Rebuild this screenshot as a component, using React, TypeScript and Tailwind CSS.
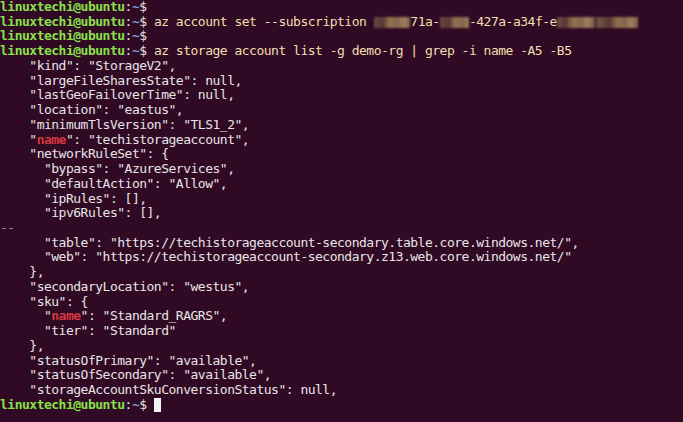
import React from "react";

type Seg = { t: string; c?: string; blur?: number };

const G = "text-[#8ae04a] font-bold";
const W = "text-[#e8e4e6]";
const CMD = "text-[#f0dfb0]";
const B = "text-[#7f9fd0] font-bold";
const R = "text-[#d8373f] font-bold";

const prompt = (): Seg[] => [
  { t: "linuxtechi@ubuntu", c: G },
  { t: ":", c: W },
  { t: "~", c: B },
  { t: "$ ", c: W },
];

const Blur = ({ n }: { n: number }) => {
  const shades = ["#a08858", "#6a4a40", "#b89c68", "#7c5e48", "#aa8e5c", "#5c3c38", "#92764e", "#bea270", "#6e5042", "#a2865a", "#886a4c", "#b0945e"];
  return (
    <span className="inline-flex h-[11px] align-middle blur-[0.8px]" style={{ width: `${n * 7.33}px` }}>
      {Array.from({ length: n * 2 }).map((_, i) => (
        <span
          key={i}
          className="h-full flex-1"
          style={{ background: shades[(i * 5 + 3) % shades.length], opacity: 0.75 }}
        />
      ))}
    </span>
  );
};

const lines: Seg[][] = [
  prompt(),
  [
    ...prompt(),
    { t: "az account set --subscription ", c: CMD },
    { t: "", blur: 5 },
    { t: "71a-", c: CMD },
    { t: "", blur: 4 },
    { t: "-427a-a34f-e", c: CMD },
    { t: "", blur: 11 },
  ],
  prompt(),
  [...prompt(), { t: "az storage account list -g demo-rg | grep -i name -A5 -B5", c: CMD }],
  [{ t: '    "kind": "StorageV2",' }],
  [{ t: '    "largeFileSharesState": null,' }],
  [{ t: '    "lastGeoFailoverTime": null,' }],
  [{ t: '    "location": "eastus",' }],
  [{ t: '    "minimumTlsVersion": "TLS1_2",' }],
  [{ t: '    "' }, { t: "name", c: R }, { t: '": "techistorageaccount",' }],
  [{ t: '    "networkRuleSet": {' }],
  [{ t: '      "bypass": "AzureServices",' }],
  [{ t: '      "defaultAction": "Allow",' }],
  [{ t: '      "ipRules": [],' }],
  [{ t: '      "ipv6Rules": [],' }],
  [{ t: "--", c: "text-[#8f9aa0]" }],
  [{ t: '      "table": "https://techistorageaccount-secondary.table.core.windows.net/",' }],
  [{ t: '      "web": "https://techistorageaccount-secondary.z13.web.core.windows.net/"' }],
  [{ t: "    }," }],
  [{ t: '    "secondaryLocation": "westus",' }],
  [{ t: '    "sku": {' }],
  [{ t: '      "' }, { t: "name", c: R }, { t: '": "Standard_RAGRS",' }],
  [{ t: '      "tier": "Standard"' }],
  [{ t: "    }," }],
  [{ t: '    "statusOfPrimary": "available",' }],
  [{ t: '    "statusOfSecondary": "available",' }],
  [{ t: '    "storageAccountSkuConversionStatus": null,' }],
];

export default function App() {
  return (
    <div
      className="min-h-screen w-full bg-[#300a24] text-[13px] leading-[14.74px] tracking-[-0.5px] text-[#e8e4e6] overflow-hidden"
      style={{ fontFamily: '"DejaVu Sans Mono", "Liberation Mono", monospace' }}
    >
      {lines.map((segs, i) => (
        <div key={i} className="h-[14.74px] whitespace-pre">
          {segs.map((s, j) =>
            s.blur ? (
              <Blur key={j} n={s.blur} />
            ) : (
              <span key={j} className={s.c ?? W}>
                {s.t}
              </span>
            )
          )}
        </div>
      ))}
      <div className="h-[14.74px] whitespace-pre flex items-center">
        {prompt().map((s, j) => (
          <span key={j} className={s.c}>
            {s.t}
          </span>
        ))}
        <span className="inline-block w-[7px] h-[14px] bg-[#f2f2f2]" />
      </div>
    </div>
  );
}
